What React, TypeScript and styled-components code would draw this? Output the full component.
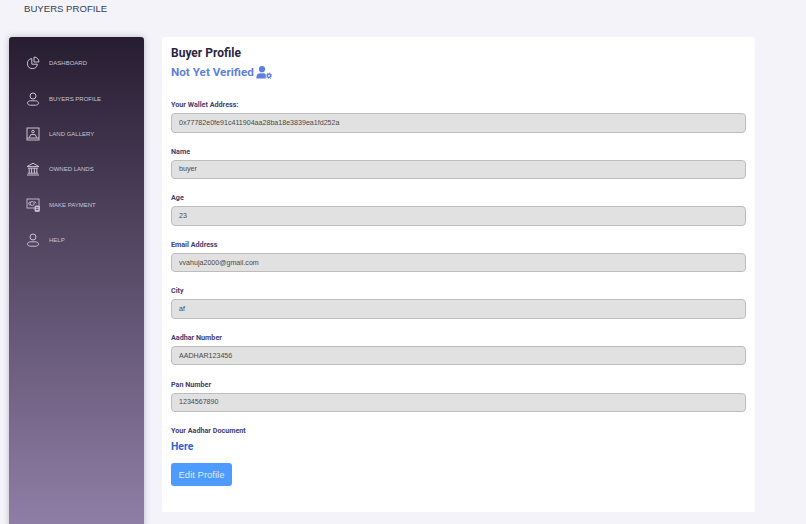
import React from 'react';
import styled, { createGlobalStyle } from 'styled-components';

const GlobalStyle = createGlobalStyle`
  html, body {
    margin: 0;
    height: 524px;
    overflow: hidden;
    background: #f4f3f9;
  }
`;

const Page = styled.div`
  height: 524px;
  overflow: hidden;
  font-family: 'Liberation Sans', Arial, sans-serif;
`;

const TopBar = styled.div`
  height: 37px;
  padding: 3px 0 0 24px;
  box-sizing: border-box;
  font-size: 9.6px;
  line-height: 12px;
  color: #344055;
`;

const Body = styled.div`
  display: flex;
  align-items: flex-start;
  gap: 18px;
  padding-left: 9px;
`;

const Sidebar = styled.nav`
  width: 135px;
  height: 490px;
  flex: none;
  box-sizing: border-box;
  padding-top: 8.5px;
  border-radius: 3px 3px 0 0;
  background: linear-gradient(180deg, #271d31 0%, #8f7fa6 100%);
  box-shadow: 0 0 6px rgba(60, 50, 90, 0.3);
`;

const NavItem = styled.a`
  display: flex;
  align-items: center;
  height: 35.4px;
  padding-left: 16.5px;
  gap: 9.5px;
  color: #c9c3d1;
  font-size: 6px;
  text-transform: uppercase;
`;

const IconBox = styled.span`
  display: flex;
  width: 14px;
  height: 14px;
  flex: none;
`;

const Card = styled.main`
  width: 593px;
  height: 475px;
  flex: none;
  box-sizing: border-box;
  padding: 9px;
  border-radius: 2px;
  background: #fff;
`;

const Title = styled.h1`
  margin: 0;
  font-family: Roboto, sans-serif;
  font-size: 12px;
  line-height: 15px;
  font-weight: 700;
  color: #2a2540;
`;

const Status = styled.div`
  display: flex;
  align-items: center;
  gap: 2px;
  height: 22px;
  margin-bottom: 16px;
  font-family: Roboto, sans-serif;
  font-size: 11.7px;
  font-weight: 700;
  color: #5f7fe0;
`;

const Field = styled.div`
  height: 46.6px;
`;

const Label = styled.label`
  display: block;
  height: 14px;
  font-family: Roboto, sans-serif;
  font-size: 7.2px;
  line-height: 11px;
  font-weight: 700;
  color: #45406e;
`;

const Input = styled.input`
  display: block;
  width: 575px;
  height: 19.5px;
  box-sizing: border-box;
  padding: 0 7px;
  border: 1px solid #bdbdbd;
  border-radius: 4px;
  background: #e1e1e1;
  color: #4a4a4a;
  font-family: 'Liberation Sans', Arial, sans-serif;
  font-size: 7.1px;
`;

const DocLink = styled.a`
  display: block;
  height: 21px;
  font-family: Roboto, sans-serif;
  font-size: 10.4px;
  line-height: 15px;
  font-weight: 700;
  color: #2f62d8;
`;

const EditButton = styled.button`
  display: block;
  width: 61px;
  height: 23px;
  margin-top: 3px;
  padding: 0;
  border: none;
  border-radius: 3px;
  background: #4e9bff;
  color: #dcebff;
  font-family: 'Liberation Sans', Arial, sans-serif;
  font-size: 9.5px;
`;

const stroke = { fill: 'none', stroke: 'currentColor', strokeWidth: 1 };

const PieIcon = () => (
  <svg viewBox="0 0 14 14" width="14" height="14" {...stroke}>
    <path d="M5.8 2.6a5 5 0 1 0 5.6 5.6H5.8z" />
    <path d="M8 1a5 5 0 0 1 5 5H8z" />
  </svg>
);

const UserIcon = () => (
  <svg viewBox="0 0 14 14" width="14" height="14" {...stroke}>
    <circle cx="7" cy="4" r="3" />
    <path d="M4.4 8.8h5.2c1.6 0 2.9 1 2.9 2.3s-1.3 2.1-2.9 2.1H4.4c-1.6 0-2.9-.8-2.9-2.1s1.3-2.3 2.9-2.3z" />
  </svg>
);

const GalleryIcon = () => (
  <svg viewBox="0 0 14 14" width="14" height="14" {...stroke}>
    <rect x="1" y="1" width="12" height="12" />
    <circle cx="7" cy="4.6" r="1.3" />
    <path d="M3.2 10.8l1.6-3.2h4.4l1.6 3.2M1 11h12" />
  </svg>
);

const BankIcon = () => (
  <svg viewBox="0 0 14 14" width="14" height="14" {...stroke}>
    <path d="M1 4.6L7 1.2l6 3.4zM2 6.2h10M3.2 6.2v4.8M5.6 6.2v4.8M8.4 6.2v4.8M10.8 6.2v4.8M1.8 11.2h10.4M1 13h12" />
  </svg>
);

const PaymentIcon = () => (
  <svg viewBox="0 0 14 14" width="14" height="14" {...stroke} strokeWidth="0.9">
    <rect x="1" y="1" width="12" height="9" />
    <path d="M2.6 5.5l1.4-2M2.6 5.5l1.4 2M8.6 3.4l1.6 2" />
    <circle cx="6.2" cy="5.5" r="2" />
    <rect x="9" y="8" width="4.4" height="5.4" rx="0.6" fill="#c9c3d1" />
    <path d="M10 9.8h2.4M10 11.6h2.4" stroke="#4a3c58" />
  </svg>
);

const UserCogIcon = () => (
  <svg viewBox="0 0 16 13" width="16" height="13" fill="currentColor">
    <circle cx="6" cy="3.2" r="3.1" />
    <path d="M0.4 12.6v-1.4A4 4 0 0 1 4.4 7.3h3.2c.8 0 1.5.2 2.1.6v4.7z" />
    <circle cx="13" cy="9.8" r="1.7" fill="none" stroke="currentColor" strokeWidth="1.5" />
    <circle cx="13" cy="9.8" r="2.9" fill="none" stroke="currentColor" strokeWidth="0.9" strokeDasharray="1 1.28" />
  </svg>
);

const navItems = [
  { label: 'Dashboard', icon: <PieIcon /> },
  { label: 'Buyers Profile', icon: <UserIcon /> },
  { label: 'Land Gallery', icon: <GalleryIcon /> },
  { label: 'Owned Lands', icon: <BankIcon /> },
  { label: 'Make Payment', icon: <PaymentIcon /> },
  { label: 'Help', icon: <UserIcon /> }
];

const fields = [
  { label: 'Your Wallet Address:', value: '0x77782e0fe91c411904aa28ba18e3839ea1fd252a' },
  { label: 'Name', value: 'buyer' },
  { label: 'Age', value: '23' },
  { label: 'Email Address', value: 'vvahuja2000@gmail.com' },
  { label: 'City', value: 'af' },
  { label: 'Aadhar Number', value: 'AADHAR123456' },
  { label: 'Pan Number', value: '1234567890' }
];

export default function App() {
  return (
    <Page>
      <GlobalStyle />
      <TopBar>BUYERS PROFILE</TopBar>
      <Body>
        <Sidebar>
          {navItems.map(item => (
            <NavItem key={item.label}>
              <IconBox>{item.icon}</IconBox>
              {item.label}
            </NavItem>
          ))}
        </Sidebar>
        <Card>
          <Title>Buyer Profile</Title>
          <Status>
            Not Yet Verified <UserCogIcon />
          </Status>
          {fields.map(field => (
            <Field key={field.label}>
              <Label>{field.label}</Label>
              <Input readOnly value={field.value} />
            </Field>
          ))}
          <Label>Your Aadhar Document</Label>
          <DocLink>Here</DocLink>
          <EditButton>Edit Profile</EditButton>
        </Card>
      </Body>
    </Page>
  );
}
